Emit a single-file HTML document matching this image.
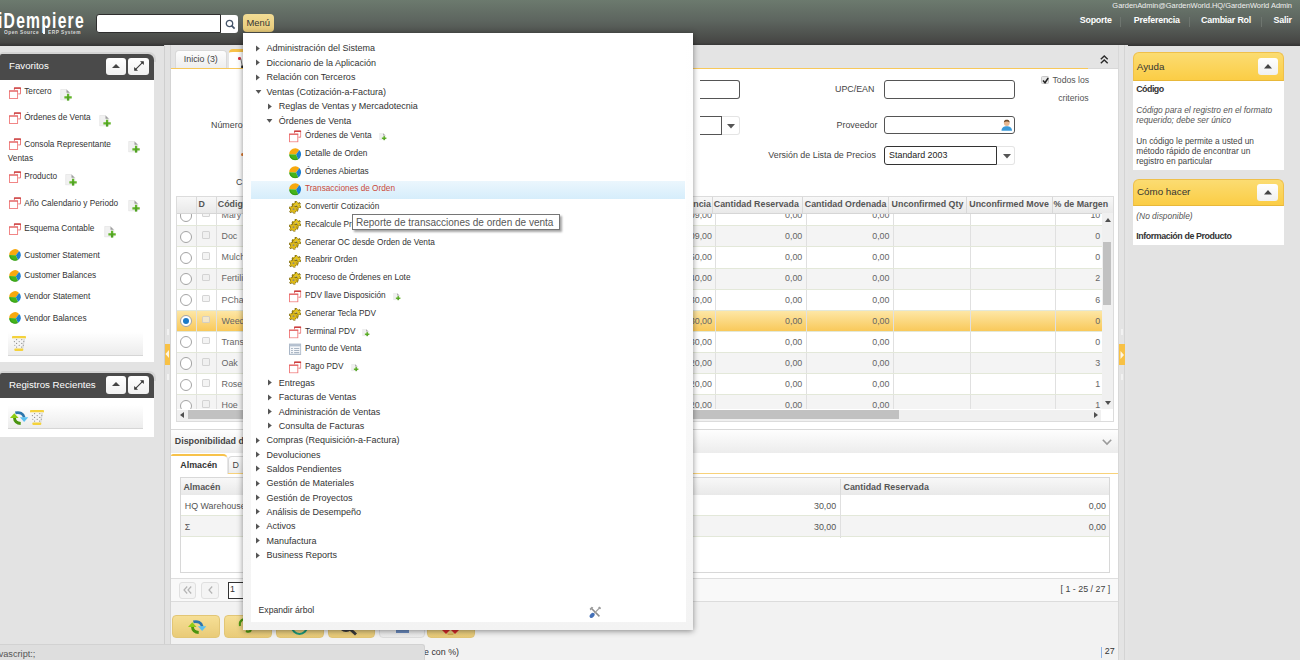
<!DOCTYPE html>
<html><head><meta charset="utf-8">
<style>
*{box-sizing:border-box}
html,body{margin:0;padding:0}
body{width:1300px;height:660px;overflow:hidden;position:relative;background:#e3e3e3;font-family:"Liberation Sans",sans-serif;color:#333;-webkit-font-smoothing:antialiased}
.a{position:absolute}
.t{position:absolute;white-space:nowrap;line-height:1;margin-top:.9px}
svg.i{position:absolute;overflow:visible}
.btn{background:linear-gradient(#fff,#f0f0f0);border-radius:3px}
.up:after{content:"";position:absolute;left:50%;top:50%;margin:-2.3px 0 0 -4px;border:4px solid transparent;border-top:0;border-bottom:4.6px solid #444}
#hdr{left:0;top:0;width:1300px;height:45.5px;background:linear-gradient(#6c7a6e,#5d655f 45%,#464644 92%,#333)}
</style></head><body>
<svg width="0" height="0" style="position:absolute">
<defs>
<symbol id="win" viewBox="0 0 12 12">
 <path d="M5.4 3.2V0.9h6.1v6h-2.3" fill="none" stroke="#e56b6b" stroke-width="0.9"/>
 <rect x="5" y="0.5" width="6.9" height="1.3" fill="#c83a3a"/>
 <rect x="0.5" y="3.9" width="8.1" height="7.6" fill="#fff" stroke="#f07a7a" stroke-width="0.9"/>
 <rect x="0.1" y="3.5" width="8.9" height="1.1" fill="#e06262"/>
</symbol>
<symbol id="newdoc" viewBox="0 0 12 12">
 <path d="M0.5 0.5h6.2l3.3 3.3v7.7h-9.5z" fill="#f1f1f1" stroke="#e2e2e2" stroke-width="0.7"/>
 <path d="M6.5 0.5l3.5 3.5h-3.5z" fill="#9d9d9d"/>
 <path d="M7 5h2.3v2.6h2.7v2.4h-2.7v2.6h-2.3v-2.6h-2.7v-2.4h2.7z" fill="#62b52a"/>
 <path d="M7 7.6h2.3v5h-2.3z" fill="#3f8f1f" opacity="0.5"/>
</symbol>
<symbol id="pie" viewBox="0 0 12 12">
 <path d="M6.9 6.3L0.2 6A5.8 5.8 0 0 1 10.1 1.9z" fill="#f8a90e"/>
 <path d="M6.9 6.3L10.1 1.9A5.8 5.8 0 0 1 8.9 11.02z" fill="#1c7fd2"/>
 <path d="M6.9 6.3L8.9 11.02A5.8 5.8 0 0 1 0.2 6z" fill="#45b41c"/>
 <path d="M0.3 6.6A5.8 5.8 0 0 0 8.9 11.02L8.4 10A4.8 4.8 0 0 1 1.3 6.6z" fill="#2c8e12" opacity="0.55"/>
</symbol>
<symbol id="gear" viewBox="0 0 12 12">
 <g transform="translate(7.2 4.5)">
  <circle r="3.3" fill="#6e5c0c"/><circle r="3.55" fill="none" stroke="#6e5c0c" stroke-width="2.2" stroke-dasharray="1.9 1.82"/>
  <circle r="2.8" fill="#e4c420"/><circle r="3.4" fill="none" stroke="#e4c420" stroke-width="1.4" stroke-dasharray="1.7 2.02"/>
  <circle r="0.9" fill="#b0b0a0"/>
 </g>
 <g transform="translate(4.4 7.9)">
  <circle r="3.3" fill="#6e5c0c"/><circle r="3.55" fill="none" stroke="#6e5c0c" stroke-width="2.2" stroke-dasharray="1.9 1.82"/>
  <circle r="2.8" fill="#dcb81a"/><circle r="3.4" fill="none" stroke="#dcb81a" stroke-width="1.4" stroke-dasharray="1.7 2.02"/>
  <circle r="0.9" fill="#8a8a80"/>
 </g>
</symbol>
<symbol id="info" viewBox="0 0 12 12">
 <rect x="0.5" y="1" width="11" height="10" fill="#f4f6f9" stroke="#a9b6c6" stroke-width="1"/>
 <rect x="0.5" y="1" width="11" height="2.2" fill="#b4c0cf"/>
 <path d="M2 5.3h1.8M5 5.3h5M2 7.3h1.8M5 7.3h5M2 9.3h1.8M5 9.3h5" stroke="#aab6c4" stroke-width="1"/>
</symbol>
<symbol id="trash" viewBox="0 0 14 15">
 <rect x="0" y="0" width="14" height="2.5" rx="0.8" fill="#f4d23c"/>
 <path d="M1 2.5h12l-1.6 10.2h-8.8z" fill="#f4f4f4"/>
 <path d="M13 2.5l-1.6 10.2h-1.4l1.5-10.2z" fill="#dcdcdc"/>
 <g fill="#8c8c8c"><circle cx="4.6" cy="3.6" r="0.6"/><circle cx="9.8" cy="3.6" r="0.6"/><circle cx="2.4" cy="5.6" r="0.6"/><circle cx="7.2" cy="5.6" r="0.6"/><circle cx="11.8" cy="5.6" r="0.5"/><circle cx="4.6" cy="7.4" r="0.6"/><circle cx="9.8" cy="7.4" r="0.6"/><circle cx="2.8" cy="9.3" r="0.55"/><circle cx="7.2" cy="9.3" r="0.6"/><circle cx="11.3" cy="9.3" r="0.5"/><circle cx="4.6" cy="11.1" r="0.6"/><circle cx="9.6" cy="11.1" r="0.6"/></g>
 <rect x="2.3" y="12.6" width="9" height="2.3" rx="0.8" fill="#f4d23c"/>
</symbol>
<symbol id="refresh" viewBox="0 0 19 14">
 <path d="M4.6 6.8C4.6 10.2 7.2 12.4 11 12.6" fill="none" stroke="#4a9410" stroke-width="3"/>
 <path d="M0 7L4.4 2 8.8 7z" fill="#8ccc14"/>
 <path d="M5.5 1.8C9.8 0.6 13.8 2.4 14.6 6.6" fill="none" stroke="#2d76ad" stroke-width="2.8"/>
 <path d="M10.2 6.2h8.6L14.5 11.2z" fill="#5ac0f0"/>
</symbol>
<symbol id="tri" viewBox="0 0 4 7"><path d="M0 0.6l3.8 2.9-3.8 2.9z" fill="#555"/></symbol>
<symbol id="trid" viewBox="0 0 7 4"><path d="M0.6 0h5.8l-2.9 3.8z" fill="#555"/></symbol>
</defs>
</svg>

<!-- HEADER -->
<div id="hdr" class="a"></div>

<!-- header content -->
<div class="t" style="left:-2.5px;top:8.7px;font-size:21.8px;font-weight:bold;color:#fff;transform:scaleX(0.72);transform-origin:0 0;letter-spacing:1.7px">iDempiere</div>
<div class="t" style="left:3.5px;top:28.8px;font-size:5.6px;color:#d8d8d8;letter-spacing:0.55px;font-weight:bold;transform:scaleX(0.86);transform-origin:0 0">Open Source</div>
<div class="a" style="left:42.8px;top:26px;width:2.7px;height:7.8px;background:#fafafa"></div>
<div class="t" style="left:47.7px;top:28.8px;font-size:5.6px;color:#d8d8d8;letter-spacing:0.55px;font-weight:bold;transform:scaleX(0.86);transform-origin:0 0">ERP System</div>
<div class="a" style="left:96px;top:14px;width:125px;height:19px;background:#fff;border:1.5px solid #2e2e2e;border-radius:3px 0 0 3px"></div>
<div class="a" style="left:221px;top:14.5px;width:17px;height:18px;background:#fff;border-radius:0 3px 3px 0"></div>
<svg class="i" style="left:224.5px;top:18.5px" width="11" height="11" viewBox="0 0 11 11"><circle cx="4.5" cy="4.5" r="3.2" fill="none" stroke="#46566a" stroke-width="1.3"/><path d="M6.8 6.8l2.8 2.8" stroke="#46566a" stroke-width="1.7"/></svg>
<div class="a" style="left:243px;top:14px;width:31px;height:18px;background:linear-gradient(#f2dc95,#e6c978);border-radius:4px"></div>
<div class="t" style="left:246.5px;top:17.5px;font-size:9.4px;color:#333">Menú</div>
<div class="t" style="right:8px;top:1.5px;font-size:7.45px;color:#f0f0f0">GardenAdmin@GardenWorld.HQ/GardenWorld Admin</div>
<div class="t" style="left:1079.7px;top:15.6px;font-size:8.9px;font-weight:bold;color:#fff;letter-spacing:-0.2px">Soporte</div>
<div class="a" style="left:1120px;top:17px;width:1px;height:10px;background:#6e756f"></div>
<div class="t" style="left:1133.7px;top:15.6px;font-size:8.9px;font-weight:bold;color:#fff;letter-spacing:-0.2px">Preferencia</div>
<div class="a" style="left:1188.7px;top:17px;width:1px;height:10px;background:#6e756f"></div>
<div class="t" style="left:1201px;top:15.6px;font-size:8.9px;font-weight:bold;color:#fff;letter-spacing:-0.2px">Cambiar Rol</div>
<div class="a" style="left:1261.3px;top:17px;width:1px;height:10px;background:#6e756f"></div>
<div class="t" style="left:1273.5px;top:15.6px;font-size:8.9px;font-weight:bold;color:#fff;letter-spacing:-0.2px">Salir</div>

<!-- LEFT PANEL -->
<div class="a" style="left:0;top:52px;width:156px;height:10px;background:#d4d4d4;border-radius:3px 7px 0 0"></div>
<div class="a" style="left:0;top:54px;width:154px;height:26px;background:#4a4a4a;border-radius:2px 6px 0 0"></div>
<div class="t" style="left:9px;top:60.3px;font-size:9.7px;color:#fff">Favoritos</div>
<div class="a btn up" style="left:105.8px;top:57.5px;width:20px;height:17.5px"></div>
<div class="a btn" style="left:128.2px;top:57.5px;width:20.5px;height:17.5px"></div><svg class="i" style="left:132.5px;top:60.2px" width="12" height="12" viewBox="0 0 12 12"><path d="M2.6 9.4L9.4 2.6" stroke="#3a3a3a" stroke-width="1.1"/><path d="M7 1.2h3.8v3.8z" fill="#333"/><path d="M1.2 7v3.8h3.8z" fill="#333"/></svg>
<div class="a" style="left:0;top:80px;width:154px;height:282px;background:#fff"></div>

<svg class="i" style="left:9.0px;top:86.6px" width="12" height="12"><use href="#win"/></svg>
<div class="t" style="left:24.2px;top:87.6px;font-size:8.25px;color:#333;">Tercero</div>
<svg class="i" style="left:60.0px;top:89.2px" width="12" height="11.5"><use href="#newdoc"/></svg>
<svg class="i" style="left:9.0px;top:111.6px" width="12" height="12"><use href="#win"/></svg>
<div class="t" style="left:24.2px;top:112.7px;font-size:8.25px;color:#333;">Órdenes de Venta</div>
<svg class="i" style="left:99.4px;top:115.0px" width="12" height="11.5"><use href="#newdoc"/></svg>
<svg class="i" style="left:9.0px;top:138.0px" width="12" height="12"><use href="#win"/></svg>
<div class="t" style="left:24.2px;top:140.0px;font-size:8.25px;color:#333;">Consola Representante</div>
<svg class="i" style="left:128.0px;top:141.0px" width="12" height="11.5"><use href="#newdoc"/></svg>
<svg class="i" style="left:9.0px;top:170.6px" width="12" height="12"><use href="#win"/></svg>
<div class="t" style="left:24.2px;top:172.6px;font-size:8.25px;color:#333;">Producto</div>
<svg class="i" style="left:65.3px;top:173.8px" width="12" height="11.5"><use href="#newdoc"/></svg>
<svg class="i" style="left:9.0px;top:196.8px" width="12" height="12"><use href="#win"/></svg>
<div class="t" style="left:24.2px;top:198.7px;font-size:8.25px;color:#333;">Año Calendario y Periodo</div>
<svg class="i" style="left:128.0px;top:200.0px" width="12" height="11.5"><use href="#newdoc"/></svg>
<svg class="i" style="left:9.0px;top:222.9px" width="12" height="12"><use href="#win"/></svg>
<div class="t" style="left:24.2px;top:224.3px;font-size:8.25px;color:#333;">Esquema Contable</div>
<svg class="i" style="left:104.0px;top:225.7px" width="12" height="11.5"><use href="#newdoc"/></svg>
<div class="t" style="left:7.8px;top:154.3px;font-size:8.25px;color:#333;">Ventas</div>
<svg class="i" style="left:9.0px;top:249.2px" width="12" height="12"><use href="#pie"/></svg>
<div class="t" style="left:24.2px;top:250.7px;font-size:8.25px;color:#333;">Customer Statement</div>
<svg class="i" style="left:9.0px;top:270.0px" width="12" height="12"><use href="#pie"/></svg>
<div class="t" style="left:24.2px;top:271.5px;font-size:8.25px;color:#333;">Customer Balances</div>
<svg class="i" style="left:9.0px;top:290.9px" width="12" height="12"><use href="#pie"/></svg>
<div class="t" style="left:24.2px;top:292.4px;font-size:8.25px;color:#333;">Vendor Statement</div>
<svg class="i" style="left:9.0px;top:312.4px" width="12" height="12"><use href="#pie"/></svg>
<div class="t" style="left:24.2px;top:313.9px;font-size:8.25px;color:#333;">Vendor Balances</div>
<div class="a" style="left:7.6px;top:332px;width:135px;height:24px;background:linear-gradient(#fff,#ececec);border-bottom:1px solid #d6d6d6"></div>
<svg class="i" style="left:11.8px;top:335.5px" width="14" height="15"><use href="#trash"/></svg>
<div class="a" style="left:0;top:371px;width:156px;height:10px;background:#d4d4d4;border-radius:3px 7px 0 0"></div>
<div class="a" style="left:0;top:373px;width:154px;height:25px;background:#4a4a4a;border-radius:2px 6px 0 0"></div>
<div class="t" style="left:9.0px;top:378.8px;font-size:9.7px;color:#fff;">Registros Recientes</div>
<div class="a btn up" style="left:106px;top:376px;width:20px;height:17.5px"></div>
<div class="a btn" style="left:128px;top:376px;width:20.5px;height:17.5px"></div><svg class="i" style="left:132.5px;top:378.8px" width="12" height="12" viewBox="0 0 12 12"><path d="M2.6 9.4L9.4 2.6" stroke="#3a3a3a" stroke-width="1.1"/><path d="M7 1.2h3.8v3.8z" fill="#333"/><path d="M1.2 7v3.8h3.8z" fill="#333"/></svg>
<div class="a" style="left:0;top:398px;width:154px;height:39px;background:#fff"></div>
<div class="a" style="left:7.6px;top:405.3px;width:135.4px;height:24.2px;background:linear-gradient(#fff,#ececec);border-bottom:1px solid #d6d6d6"></div>
<svg class="i" style="left:10.3px;top:410.6px" width="18.5" height="14"><use href="#refresh"/></svg>
<svg class="i" style="left:30.3px;top:409.8px" width="14" height="15"><use href="#trash"/></svg>
<div class="a" style="left:164.0px;top:45.0px;width:7.0px;height:615.0px;background:#e2e2e2;border-left:1px solid #cfcfcf;border-right:1px solid #d4d4d4"></div>
<div class="a" style="left:164.5px;top:343.5px;width:5.5px;height:21.5px;background:#f8c145"></div>
<svg class="i" style="left:165px;top:350px" width="5" height="8"><path d="M4 0v8L0.5 4z" fill="#fff" opacity="0.85"/></svg>
<div class="a" style="left:1118.0px;top:45.0px;width:10.0px;height:615.0px;background:#e4e4e4;border-left:1px solid #d8d8d8"></div>
<div class="a" style="left:1124.3px;top:45.0px;width:1.0px;height:615.0px;background:#d4d4d4"></div>
<div class="a" style="left:1119.0px;top:343.5px;width:5.6px;height:21.3px;background:#f8c145"></div>
<svg class="i" style="left:1120px;top:350.5px" width="5" height="8"><path d="M0.5 0v8L4 4z" fill="#fff" opacity="0.85"/></svg>
<div class="a" style="left:1121.0px;top:329.0px;width:2.0px;height:6.0px;background:#f2f2f2"></div>
<div class="a" style="left:166.5px;top:329.0px;width:2.0px;height:6.0px;background:#f2f2f2"></div>
<div class="a" style="left:1121.0px;top:374.0px;width:2.0px;height:6.0px;background:#f2f2f2"></div>
<div class="a" style="left:166.5px;top:374.0px;width:2.0px;height:6.0px;background:#f2f2f2"></div>
<div class="a" style="left:171.0px;top:45.0px;width:947.0px;height:615.0px;background:#fff"></div>
<div class="a" style="left:171.0px;top:45.0px;width:947.0px;height:23.5px;background:#e4e4e4"></div>
<div class="a" style="left:175.0px;top:50.0px;width:51.5px;height:18.5px;background:linear-gradient(#fdfdfd,#ededed);border:1px solid #d9d9d9;border-bottom:0;border-radius:4px 4px 0 0"></div>
<div class="t" style="left:183.8px;top:54.4px;font-size:8.9px;color:#444;">Inicio (3)</div>
<div class="a" style="left:229.0px;top:49.1px;width:71.0px;height:19.9px;background:#fff;border-top:3px solid #f7c24a;border-radius:4px 4px 0 0"></div>
<div class="a" style="left:238.2px;top:57.2px;width:2.6px;height:2.6px;border-radius:50%;background:#d83040"></div>
<svg class="i" style="left:240px;top:58px" width="4" height="11"><path d="M0.8 0.5L2.3 8.5" stroke="#666" stroke-width="0.9"/><rect x="1.2" y="7.6" width="2.6" height="2.4" fill="#222"/></svg>
<div class="a" style="left:171.0px;top:68.0px;width:917.0px;height:1.2px;background:#f7c85a"></div>
<div class="a" style="left:1088.0px;top:68.0px;width:30.0px;height:1.2px;background:#d8d8d8"></div>
<svg class="i" style="left:1099.5px;top:55px" width="8.5" height="9" viewBox="0 0 8.5 9"><path d="M0.8 4.3L4.25 1 7.7 4.3M0.8 8.2L4.25 4.9 7.7 8.2" fill="none" stroke="#2a2a2a" stroke-width="1.4"/></svg>
<div class="t" style="left:211.0px;top:119.9px;font-size:8.9px;color:#444;">Número</div>
<div class="a" style="left:700.0px;top:80.4px;width:39.6px;height:18.4px;background:#fff;border:1.3px solid #555;border-left:0;border-radius:0 3px 3px 0"></div>
<div class="a" style="left:700.0px;top:116.0px;width:21.6px;height:18.5px;background:#fff;border:1.3px solid #555;border-left:0"></div>
<div class="a" style="left:721.6px;top:116.0px;width:18.0px;height:18.5px;background:#fff;border:1px solid #e4e4e4;border-left:0;border-radius:0 3px 3px 0"></div>
<svg class="i" style="left:727px;top:123.5px" width="8" height="4.5"><path d="M0 0h8L4 4.5z" fill="#555"/></svg>
<div class="t" style="left:835.0px;top:84.5px;font-size:8.9px;color:#444;">UPC/EAN</div>
<div class="a" style="left:884.4px;top:80.4px;width:131.0px;height:18.6px;background:#fff;border:1.3px solid #555;border-radius:3px"></div>
<div class="t" style="left:836.5px;top:120.4px;font-size:8.9px;color:#444;">Proveedor</div>
<div class="a" style="left:884.4px;top:116.2px;width:131.0px;height:18.2px;background:#fff;border:1.3px solid #555;border-radius:3px"></div>
<svg class="i" style="left:1001px;top:119.4px" width="11.5" height="12" viewBox="0 0 12 12"><path d="M0.5 12C0.5 8.5 3 7.2 6 7.2S11.5 8.5 11.5 12z" fill="#3b9ad8"/><circle cx="6" cy="4" r="3" fill="#e8b890"/><path d="M3 3.5C3 1 4.5 0.5 6 0.5S9 1 9 3.5C8 2.5 7 2.3 6 2.3S4 2.5 3 3.5z" fill="#6b4a2a"/></svg>
<div class="t" style="left:768.3px;top:150.0px;font-size:8.9px;color:#444;">Versión de Lista de Precios</div>
<div class="a" style="left:884.4px;top:146.3px;width:112.7px;height:18.3px;background:#fff;border:1.3px solid #333;border-right-width:1.3px;border-radius:3px 0 0 3px"></div>
<div class="a" style="left:997.1px;top:146.3px;width:18.3px;height:18.3px;background:#fff;border:1px solid #e4e4e4;border-left:0;border-radius:0 3px 3px 0"></div>
<svg class="i" style="left:1002.5px;top:154px" width="8" height="4.5"><path d="M0 0h8L4 4.5z" fill="#555"/></svg>
<div class="t" style="left:889.1px;top:150.0px;font-size:8.9px;color:#222;">Standard 2003</div>
<div class="a" style="left:1041.2px;top:76.0px;width:8.1px;height:8.0px;background:#e8e8e8;border:1px solid #c8c8c8;border-radius:1.5px"></div>
<svg class="i" style="left:1042px;top:76.5px" width="7" height="7"><path d="M1 3.5L3 5.7 6.2 1" fill="none" stroke="#222" stroke-width="1.5"/></svg>
<div class="t" style="left:1052.5px;top:75.2px;font-size:8.7px;color:#555;">Todos los</div>
<div class="t" style="left:1058.2px;top:93.1px;font-size:8.7px;color:#555;">criterios</div>
<div class="t" style="left:236.0px;top:176.9px;font-size:8.9px;color:#444;">C</div>
<div class="a" style="left:241px;top:152.5px;width:3px;height:3px;border-radius:50%;background:#e07a30"></div>
<div class="a" style="left:175.5px;top:195.5px;width:938.2px;height:226.0px;background:#fff;border:1px solid #dcdcdc"></div>
<div class="a" style="left:176.5px;top:196.5px;width:936.2px;height:17.7px;background:linear-gradient(#f8f8f8,#e9e9e9);border-bottom:1px solid #d6d6d6"></div>
<div class="a" style="left:195.5px;top:196.5px;width:1.0px;height:16.8px;background:#d8d8d8"></div>
<div class="a" style="left:215.5px;top:196.5px;width:1.0px;height:16.8px;background:#d8d8d8"></div>
<div class="a" style="left:711.5px;top:196.5px;width:1.0px;height:16.8px;background:#d8d8d8"></div>
<div class="a" style="left:801.5px;top:196.5px;width:1.0px;height:16.8px;background:#d8d8d8"></div>
<div class="a" style="left:888.4px;top:196.5px;width:1.0px;height:16.8px;background:#d8d8d8"></div>
<div class="a" style="left:965.5px;top:196.5px;width:1.0px;height:16.8px;background:#d8d8d8"></div>
<div class="a" style="left:1051.6px;top:196.5px;width:1.0px;height:16.8px;background:#d8d8d8"></div>
<div class="t" style="left:198.5px;top:199.1px;font-size:8.85px;color:#555;font-weight:bold">D</div>
<div class="t" style="left:217.8px;top:199.1px;font-size:8.85px;color:#555;font-weight:bold">Código</div>
<div class="t" style="left:713.8px;top:199.1px;font-size:8.85px;color:#555;font-weight:bold">Cantidad Reservada</div>
<div class="t" style="left:804.8px;top:199.1px;font-size:8.85px;color:#555;font-weight:bold">Cantidad Ordenada</div>
<div class="t" style="left:891.6px;top:199.1px;font-size:8.85px;color:#555;font-weight:bold">Unconfirmed Qty</div>
<div class="t" style="left:969.3px;top:199.1px;font-size:8.85px;color:#555;font-weight:bold">Unconfirmed Move</div>
<div class="t" style="left:1053.6px;top:199.1px;font-size:8.85px;color:#555;font-weight:bold">% de Margen</div>
<div class="t" style="right:589.0px;top:199.1px;font-size:8.85px;color:#555;font-weight:bold">ncia</div>
<div class="a" style="left:176.5px;top:214.2px;width:925.5px;height:195.3px;overflow:hidden">
<div class="a" style="left:0.0px;top:-9.2px;width:925.5px;height:21.0px;background:#fff;border-bottom:1px solid #e3e8d9"></div>
<div class="a" style="left:19.5px;top:-9.2px;width:1.0px;height:20.0px;background:#e0e0e0"></div>
<div class="a" style="left:39.5px;top:-9.2px;width:1.0px;height:20.0px;background:#e0e0e0"></div>
<div class="a" style="left:538.5px;top:-9.2px;width:1.0px;height:20.0px;background:#e0e0e0"></div>
<div class="a" style="left:629.5px;top:-9.2px;width:1.0px;height:20.0px;background:#e0e0e0"></div>
<div class="a" style="left:716.5px;top:-9.2px;width:1.0px;height:20.0px;background:#e0e0e0"></div>
<div class="a" style="left:793.5px;top:-9.2px;width:1.0px;height:20.0px;background:#e0e0e0"></div>
<div class="a" style="left:878.5px;top:-9.2px;width:1.0px;height:20.0px;background:#e0e0e0"></div>
<div class="a" style="left:3.7px;top:-4.8px;width:12.2px;height:12.2px;border-radius:50%;border:1.2px solid #a4a4a4;background:#fff"></div>
<div class="a" style="left:25.7px;top:-4.1px;width:7.7px;height:7.4px;background:rgba(238,238,238,0.65);border:1px solid rgba(190,190,190,0.6);border-radius:1.5px"></div>
<div class="t" style="left:45.0px;top:-4.1px;font-size:8.9px;color:#666;">Mary</div>
<div class="t" style="left:535.5px;top:-4.1px;font-size:8.9px;color:#666;;transform:translateX(-100%)">09,00</div>
<div class="t" style="left:625.8px;top:-4.1px;font-size:8.9px;color:#666;;transform:translateX(-100%)">0,00</div>
<div class="t" style="left:713.0px;top:-4.1px;font-size:8.9px;color:#666;;transform:translateX(-100%)">0,00</div>
<div class="t" style="left:923.8px;top:-4.1px;font-size:8.9px;color:#666;;transform:translateX(-100%)">10</div>
<div class="a" style="left:0.0px;top:11.8px;width:925.5px;height:21.0px;background:#f4f4f4;border-bottom:1px solid #e3e8d9"></div>
<div class="a" style="left:19.5px;top:11.8px;width:1.0px;height:20.0px;background:#e0e0e0"></div>
<div class="a" style="left:39.5px;top:11.8px;width:1.0px;height:20.0px;background:#e0e0e0"></div>
<div class="a" style="left:538.5px;top:11.8px;width:1.0px;height:20.0px;background:#e0e0e0"></div>
<div class="a" style="left:629.5px;top:11.8px;width:1.0px;height:20.0px;background:#e0e0e0"></div>
<div class="a" style="left:716.5px;top:11.8px;width:1.0px;height:20.0px;background:#e0e0e0"></div>
<div class="a" style="left:793.5px;top:11.8px;width:1.0px;height:20.0px;background:#e0e0e0"></div>
<div class="a" style="left:878.5px;top:11.8px;width:1.0px;height:20.0px;background:#e0e0e0"></div>
<div class="a" style="left:3.7px;top:16.4px;width:12.2px;height:12.2px;border-radius:50%;border:1.2px solid #a4a4a4;background:#fff"></div>
<div class="a" style="left:25.7px;top:17.1px;width:7.7px;height:7.4px;background:rgba(238,238,238,0.65);border:1px solid rgba(190,190,190,0.6);border-radius:1.5px"></div>
<div class="t" style="left:45.0px;top:17.1px;font-size:8.9px;color:#666;">Doc</div>
<div class="t" style="left:535.5px;top:17.1px;font-size:8.9px;color:#666;;transform:translateX(-100%)">09,00</div>
<div class="t" style="left:625.8px;top:17.1px;font-size:8.9px;color:#666;;transform:translateX(-100%)">0,00</div>
<div class="t" style="left:713.0px;top:17.1px;font-size:8.9px;color:#666;;transform:translateX(-100%)">0,00</div>
<div class="t" style="left:923.8px;top:17.1px;font-size:8.9px;color:#666;;transform:translateX(-100%)">0</div>
<div class="a" style="left:0.0px;top:32.8px;width:925.5px;height:22.0px;background:#fff;border-bottom:1px solid #e3e8d9"></div>
<div class="a" style="left:19.5px;top:32.8px;width:1.0px;height:21.0px;background:#e0e0e0"></div>
<div class="a" style="left:39.5px;top:32.8px;width:1.0px;height:21.0px;background:#e0e0e0"></div>
<div class="a" style="left:538.5px;top:32.8px;width:1.0px;height:21.0px;background:#e0e0e0"></div>
<div class="a" style="left:629.5px;top:32.8px;width:1.0px;height:21.0px;background:#e0e0e0"></div>
<div class="a" style="left:716.5px;top:32.8px;width:1.0px;height:21.0px;background:#e0e0e0"></div>
<div class="a" style="left:793.5px;top:32.8px;width:1.0px;height:21.0px;background:#e0e0e0"></div>
<div class="a" style="left:878.5px;top:32.8px;width:1.0px;height:21.0px;background:#e0e0e0"></div>
<div class="a" style="left:3.7px;top:37.5px;width:12.2px;height:12.2px;border-radius:50%;border:1.2px solid #a4a4a4;background:#fff"></div>
<div class="a" style="left:25.7px;top:38.2px;width:7.7px;height:7.4px;background:rgba(238,238,238,0.65);border:1px solid rgba(190,190,190,0.6);border-radius:1.5px"></div>
<div class="t" style="left:45.0px;top:38.2px;font-size:8.9px;color:#666;">Mulch</div>
<div class="t" style="left:535.5px;top:38.2px;font-size:8.9px;color:#666;;transform:translateX(-100%)">50,00</div>
<div class="t" style="left:625.8px;top:38.2px;font-size:8.9px;color:#666;;transform:translateX(-100%)">0,00</div>
<div class="t" style="left:713.0px;top:38.2px;font-size:8.9px;color:#666;;transform:translateX(-100%)">0,00</div>
<div class="t" style="left:923.8px;top:38.2px;font-size:8.9px;color:#666;;transform:translateX(-100%)">0</div>
<div class="a" style="left:0.0px;top:54.8px;width:925.5px;height:21.0px;background:#f4f4f4;border-bottom:1px solid #e3e8d9"></div>
<div class="a" style="left:19.5px;top:54.8px;width:1.0px;height:20.0px;background:#e0e0e0"></div>
<div class="a" style="left:39.5px;top:54.8px;width:1.0px;height:20.0px;background:#e0e0e0"></div>
<div class="a" style="left:538.5px;top:54.8px;width:1.0px;height:20.0px;background:#e0e0e0"></div>
<div class="a" style="left:629.5px;top:54.8px;width:1.0px;height:20.0px;background:#e0e0e0"></div>
<div class="a" style="left:716.5px;top:54.8px;width:1.0px;height:20.0px;background:#e0e0e0"></div>
<div class="a" style="left:793.5px;top:54.8px;width:1.0px;height:20.0px;background:#e0e0e0"></div>
<div class="a" style="left:878.5px;top:54.8px;width:1.0px;height:20.0px;background:#e0e0e0"></div>
<div class="a" style="left:3.7px;top:58.7px;width:12.2px;height:12.2px;border-radius:50%;border:1.2px solid #a4a4a4;background:#fff"></div>
<div class="a" style="left:25.7px;top:59.4px;width:7.7px;height:7.4px;background:rgba(238,238,238,0.65);border:1px solid rgba(190,190,190,0.6);border-radius:1.5px"></div>
<div class="t" style="left:45.0px;top:59.4px;font-size:8.9px;color:#666;">Fertili</div>
<div class="t" style="left:535.5px;top:59.4px;font-size:8.9px;color:#666;;transform:translateX(-100%)">40,00</div>
<div class="t" style="left:625.8px;top:59.4px;font-size:8.9px;color:#666;;transform:translateX(-100%)">0,00</div>
<div class="t" style="left:713.0px;top:59.4px;font-size:8.9px;color:#666;;transform:translateX(-100%)">0,00</div>
<div class="t" style="left:923.8px;top:59.4px;font-size:8.9px;color:#666;;transform:translateX(-100%)">2</div>
<div class="a" style="left:0.0px;top:75.8px;width:925.5px;height:21.0px;background:#fff;border-bottom:1px solid #e3e8d9"></div>
<div class="a" style="left:19.5px;top:75.8px;width:1.0px;height:20.0px;background:#e0e0e0"></div>
<div class="a" style="left:39.5px;top:75.8px;width:1.0px;height:20.0px;background:#e0e0e0"></div>
<div class="a" style="left:538.5px;top:75.8px;width:1.0px;height:20.0px;background:#e0e0e0"></div>
<div class="a" style="left:629.5px;top:75.8px;width:1.0px;height:20.0px;background:#e0e0e0"></div>
<div class="a" style="left:716.5px;top:75.8px;width:1.0px;height:20.0px;background:#e0e0e0"></div>
<div class="a" style="left:793.5px;top:75.8px;width:1.0px;height:20.0px;background:#e0e0e0"></div>
<div class="a" style="left:878.5px;top:75.8px;width:1.0px;height:20.0px;background:#e0e0e0"></div>
<div class="a" style="left:3.7px;top:79.8px;width:12.2px;height:12.2px;border-radius:50%;border:1.2px solid #a4a4a4;background:#fff"></div>
<div class="a" style="left:25.7px;top:80.5px;width:7.7px;height:7.4px;background:rgba(238,238,238,0.65);border:1px solid rgba(190,190,190,0.6);border-radius:1.5px"></div>
<div class="t" style="left:45.0px;top:80.5px;font-size:8.9px;color:#666;">PCha</div>
<div class="t" style="left:535.5px;top:80.5px;font-size:8.9px;color:#666;;transform:translateX(-100%)">30,00</div>
<div class="t" style="left:625.8px;top:80.5px;font-size:8.9px;color:#666;;transform:translateX(-100%)">0,00</div>
<div class="t" style="left:713.0px;top:80.5px;font-size:8.9px;color:#666;;transform:translateX(-100%)">0,00</div>
<div class="t" style="left:923.8px;top:80.5px;font-size:8.9px;color:#666;;transform:translateX(-100%)">6</div>
<div class="a" style="left:0.0px;top:96.8px;width:925.5px;height:21.0px;background:linear-gradient(#fde7a6,#f9c95a);border-bottom:1px solid #e3e8d9"></div>
<div class="a" style="left:19.5px;top:96.8px;width:1.0px;height:20.0px;background:#e0e0e0"></div>
<div class="a" style="left:39.5px;top:96.8px;width:1.0px;height:20.0px;background:#e0e0e0"></div>
<div class="a" style="left:538.5px;top:96.8px;width:1.0px;height:20.0px;background:#e0e0e0"></div>
<div class="a" style="left:629.5px;top:96.8px;width:1.0px;height:20.0px;background:#e0e0e0"></div>
<div class="a" style="left:716.5px;top:96.8px;width:1.0px;height:20.0px;background:#e0e0e0"></div>
<div class="a" style="left:793.5px;top:96.8px;width:1.0px;height:20.0px;background:#e0e0e0"></div>
<div class="a" style="left:878.5px;top:96.8px;width:1.0px;height:20.0px;background:#e0e0e0"></div>
<div class="a" style="left:3.7px;top:101.0px;width:12.2px;height:12.2px;border-radius:50%;border:1.2px solid #a4a4a4;background:#fff"></div>
<div class="a" style="left:6.6px;top:103.9px;width:6.4px;height:6.4px;border-radius:50%;background:#1c7ac6"></div>
<div class="a" style="left:25.7px;top:101.7px;width:7.7px;height:7.4px;background:rgba(238,238,238,0.65);border:1px solid rgba(190,190,190,0.6);border-radius:1.5px"></div>
<div class="t" style="left:45.0px;top:101.7px;font-size:8.9px;color:#666;">Weed</div>
<div class="t" style="left:535.5px;top:101.7px;font-size:8.9px;color:#666;;transform:translateX(-100%)">30,00</div>
<div class="t" style="left:625.8px;top:101.7px;font-size:8.9px;color:#666;;transform:translateX(-100%)">0,00</div>
<div class="t" style="left:713.0px;top:101.7px;font-size:8.9px;color:#666;;transform:translateX(-100%)">0,00</div>
<div class="t" style="left:923.8px;top:101.7px;font-size:8.9px;color:#666;;transform:translateX(-100%)">0</div>
<div class="a" style="left:0.0px;top:117.8px;width:925.5px;height:21.0px;background:#fff;border-bottom:1px solid #e3e8d9"></div>
<div class="a" style="left:19.5px;top:117.8px;width:1.0px;height:20.0px;background:#e0e0e0"></div>
<div class="a" style="left:39.5px;top:117.8px;width:1.0px;height:20.0px;background:#e0e0e0"></div>
<div class="a" style="left:538.5px;top:117.8px;width:1.0px;height:20.0px;background:#e0e0e0"></div>
<div class="a" style="left:629.5px;top:117.8px;width:1.0px;height:20.0px;background:#e0e0e0"></div>
<div class="a" style="left:716.5px;top:117.8px;width:1.0px;height:20.0px;background:#e0e0e0"></div>
<div class="a" style="left:793.5px;top:117.8px;width:1.0px;height:20.0px;background:#e0e0e0"></div>
<div class="a" style="left:878.5px;top:117.8px;width:1.0px;height:20.0px;background:#e0e0e0"></div>
<div class="a" style="left:3.7px;top:122.1px;width:12.2px;height:12.2px;border-radius:50%;border:1.2px solid #a4a4a4;background:#fff"></div>
<div class="a" style="left:25.7px;top:122.8px;width:7.7px;height:7.4px;background:rgba(238,238,238,0.65);border:1px solid rgba(190,190,190,0.6);border-radius:1.5px"></div>
<div class="t" style="left:45.0px;top:122.8px;font-size:8.9px;color:#666;">Trans</div>
<div class="t" style="left:535.5px;top:122.8px;font-size:8.9px;color:#666;;transform:translateX(-100%)">30,00</div>
<div class="t" style="left:625.8px;top:122.8px;font-size:8.9px;color:#666;;transform:translateX(-100%)">0,00</div>
<div class="t" style="left:713.0px;top:122.8px;font-size:8.9px;color:#666;;transform:translateX(-100%)">0,00</div>
<div class="t" style="left:923.8px;top:122.8px;font-size:8.9px;color:#666;;transform:translateX(-100%)">0</div>
<div class="a" style="left:0.0px;top:138.8px;width:925.5px;height:21.0px;background:#f4f4f4;border-bottom:1px solid #e3e8d9"></div>
<div class="a" style="left:19.5px;top:138.8px;width:1.0px;height:20.0px;background:#e0e0e0"></div>
<div class="a" style="left:39.5px;top:138.8px;width:1.0px;height:20.0px;background:#e0e0e0"></div>
<div class="a" style="left:538.5px;top:138.8px;width:1.0px;height:20.0px;background:#e0e0e0"></div>
<div class="a" style="left:629.5px;top:138.8px;width:1.0px;height:20.0px;background:#e0e0e0"></div>
<div class="a" style="left:716.5px;top:138.8px;width:1.0px;height:20.0px;background:#e0e0e0"></div>
<div class="a" style="left:793.5px;top:138.8px;width:1.0px;height:20.0px;background:#e0e0e0"></div>
<div class="a" style="left:878.5px;top:138.8px;width:1.0px;height:20.0px;background:#e0e0e0"></div>
<div class="a" style="left:3.7px;top:143.3px;width:12.2px;height:12.2px;border-radius:50%;border:1.2px solid #a4a4a4;background:#fff"></div>
<div class="a" style="left:25.7px;top:144.0px;width:7.7px;height:7.4px;background:rgba(238,238,238,0.65);border:1px solid rgba(190,190,190,0.6);border-radius:1.5px"></div>
<div class="t" style="left:45.0px;top:144.0px;font-size:8.9px;color:#666;">Oak</div>
<div class="t" style="left:535.5px;top:144.0px;font-size:8.9px;color:#666;;transform:translateX(-100%)">20,00</div>
<div class="t" style="left:625.8px;top:144.0px;font-size:8.9px;color:#666;;transform:translateX(-100%)">0,00</div>
<div class="t" style="left:713.0px;top:144.0px;font-size:8.9px;color:#666;;transform:translateX(-100%)">0,00</div>
<div class="t" style="left:923.8px;top:144.0px;font-size:8.9px;color:#666;;transform:translateX(-100%)">3</div>
<div class="a" style="left:0.0px;top:159.8px;width:925.5px;height:21.0px;background:#fff;border-bottom:1px solid #e3e8d9"></div>
<div class="a" style="left:19.5px;top:159.8px;width:1.0px;height:20.0px;background:#e0e0e0"></div>
<div class="a" style="left:39.5px;top:159.8px;width:1.0px;height:20.0px;background:#e0e0e0"></div>
<div class="a" style="left:538.5px;top:159.8px;width:1.0px;height:20.0px;background:#e0e0e0"></div>
<div class="a" style="left:629.5px;top:159.8px;width:1.0px;height:20.0px;background:#e0e0e0"></div>
<div class="a" style="left:716.5px;top:159.8px;width:1.0px;height:20.0px;background:#e0e0e0"></div>
<div class="a" style="left:793.5px;top:159.8px;width:1.0px;height:20.0px;background:#e0e0e0"></div>
<div class="a" style="left:878.5px;top:159.8px;width:1.0px;height:20.0px;background:#e0e0e0"></div>
<div class="a" style="left:3.7px;top:164.4px;width:12.2px;height:12.2px;border-radius:50%;border:1.2px solid #a4a4a4;background:#fff"></div>
<div class="a" style="left:25.7px;top:165.1px;width:7.7px;height:7.4px;background:rgba(238,238,238,0.65);border:1px solid rgba(190,190,190,0.6);border-radius:1.5px"></div>
<div class="t" style="left:45.0px;top:165.1px;font-size:8.9px;color:#666;">Rose</div>
<div class="t" style="left:535.5px;top:165.1px;font-size:8.9px;color:#666;;transform:translateX(-100%)">20,00</div>
<div class="t" style="left:625.8px;top:165.1px;font-size:8.9px;color:#666;;transform:translateX(-100%)">0,00</div>
<div class="t" style="left:713.0px;top:165.1px;font-size:8.9px;color:#666;;transform:translateX(-100%)">0,00</div>
<div class="t" style="left:923.8px;top:165.1px;font-size:8.9px;color:#666;;transform:translateX(-100%)">1</div>
<div class="a" style="left:0.0px;top:180.8px;width:925.5px;height:22.0px;background:#f4f4f4;border-bottom:1px solid #e3e8d9"></div>
<div class="a" style="left:19.5px;top:180.8px;width:1.0px;height:21.0px;background:#e0e0e0"></div>
<div class="a" style="left:39.5px;top:180.8px;width:1.0px;height:21.0px;background:#e0e0e0"></div>
<div class="a" style="left:538.5px;top:180.8px;width:1.0px;height:21.0px;background:#e0e0e0"></div>
<div class="a" style="left:629.5px;top:180.8px;width:1.0px;height:21.0px;background:#e0e0e0"></div>
<div class="a" style="left:716.5px;top:180.8px;width:1.0px;height:21.0px;background:#e0e0e0"></div>
<div class="a" style="left:793.5px;top:180.8px;width:1.0px;height:21.0px;background:#e0e0e0"></div>
<div class="a" style="left:878.5px;top:180.8px;width:1.0px;height:21.0px;background:#e0e0e0"></div>
<div class="a" style="left:3.7px;top:185.6px;width:12.2px;height:12.2px;border-radius:50%;border:1.2px solid #a4a4a4;background:#fff"></div>
<div class="a" style="left:25.7px;top:186.3px;width:7.7px;height:7.4px;background:rgba(238,238,238,0.65);border:1px solid rgba(190,190,190,0.6);border-radius:1.5px"></div>
<div class="t" style="left:45.0px;top:186.3px;font-size:8.9px;color:#666;">Hoe</div>
<div class="t" style="left:535.5px;top:186.3px;font-size:8.9px;color:#666;;transform:translateX(-100%)">20,00</div>
<div class="t" style="left:625.8px;top:186.3px;font-size:8.9px;color:#666;;transform:translateX(-100%)">0,00</div>
<div class="t" style="left:713.0px;top:186.3px;font-size:8.9px;color:#666;;transform:translateX(-100%)">0,00</div>
<div class="t" style="left:923.8px;top:186.3px;font-size:8.9px;color:#666;;transform:translateX(-100%)">1</div>
</div>
<div class="a" style="left:1102.0px;top:213.3px;width:11.0px;height:196.2px;background:#f0f0f0"></div>
<div class="a" style="left:1103.0px;top:241.8px;width:8.2px;height:62.8px;background:#c1c1c1"></div>
<svg class="i" style="left:1104.5px;top:218px" width="6" height="4"><path d="M0 4h6L3 0z" fill="#505050"/></svg>
<svg class="i" style="left:1104.5px;top:400.5px" width="6" height="4"><path d="M0 0h6L3 4z" fill="#505050"/></svg>
<div class="a" style="left:176.5px;top:409.5px;width:924.8px;height:11.0px;background:#f0f0f0"></div>
<div class="a" style="left:187.9px;top:409.8px;width:711.0px;height:9.0px;background:#c1c1c1"></div>
<svg class="i" style="left:180px;top:412px" width="4" height="6"><path d="M4 0v6L0 3z" fill="#505050"/></svg>
<svg class="i" style="left:1093.5px;top:412px" width="4" height="6"><path d="M0 0v6L4 3z" fill="#505050"/></svg>
<div class="a" style="left:1101.3px;top:409.5px;width:11.7px;height:11.0px;background:#fff"></div>
<div class="a" style="left:171.0px;top:429.0px;width:947.0px;height:25.2px;background:linear-gradient(#fefefe,#ececec);border-top:1px solid #d8d8d8;border-bottom:1px solid #e0e0e0"></div>
<div class="t" style="left:174.8px;top:435.9px;font-size:8.9px;color:#444;font-weight:bold">Disponibilidad de Inventario</div>
<svg class="i" style="left:1102px;top:439px" width="10" height="6"><path d="M0.8 0.8L5 5 9.2 0.8" fill="none" stroke="#9a9a9a" stroke-width="1.6"/></svg>
<div class="a" style="left:171.0px;top:453.4px;width:947.0px;height:19.6px;background:#fff"></div>
<div class="a" style="left:171.0px;top:454.0px;width:56.6px;height:19.7px;background:#fff;border-top:2.6px solid #f7c24a;border-right:1px solid #e6e6e6;border-radius:2px 5px 0 0"></div>
<div class="t" style="left:180.3px;top:460.4px;font-size:8.9px;color:#333;font-weight:bold">Almacén</div>
<div class="a" style="left:228.3px;top:456.0px;width:71.7px;height:16.5px;background:linear-gradient(#fdfdfd,#ededed);border:1px solid #d9d9d9;border-bottom:0;border-radius:4px 4px 0 0"></div>
<div class="t" style="left:232.5px;top:460.4px;font-size:8.9px;color:#444;">D</div>
<div class="a" style="left:227.6px;top:472.5px;width:890.4px;height:1.2px;background:#f8d27a"></div>
<div class="a" style="left:180.3px;top:477.0px;width:929.5px;height:95.6px;background:#fff;border:1px solid #d8d8d8"></div>
<div class="a" style="left:181.3px;top:478.0px;width:927.5px;height:18.3px;background:linear-gradient(#f8f8f8,#e9e9e9);border-bottom:1px solid #d6d6d6"></div>
<div class="a" style="left:839.9px;top:478.5px;width:1.0px;height:59.0px;background:#dcdcdc"></div>
<div class="t" style="left:183.4px;top:481.8px;font-size:8.9px;color:#555;font-weight:bold">Almacén</div>
<div class="t" style="left:843.5px;top:481.8px;font-size:8.9px;color:#555;font-weight:bold">Cantidad Reservada</div>
<div class="a" style="left:181.3px;top:495.3px;width:927.5px;height:21.1px;background:#fff;border-bottom:1px solid #e3e8d9"></div>
<div class="a" style="left:181.3px;top:516.4px;width:927.5px;height:21.1px;background:#f4f4f4;border-bottom:1px solid #e3e8d9"></div>
<div class="a" style="left:839.9px;top:495.3px;width:1.0px;height:42.2px;background:#e0e0e0"></div>
<div class="t" style="left:184.8px;top:501.0px;font-size:8.9px;color:#555;">HQ Warehouse</div>
<div class="t" style="left:184.8px;top:522.1px;font-size:8.9px;color:#555;">Σ</div>
<div class="t" style="right:463.8px;top:501.0px;font-size:8.9px;color:#555;">30,00</div>
<div class="t" style="right:194.0px;top:501.0px;font-size:8.9px;color:#555;">0,00</div>
<div class="t" style="right:463.8px;top:522.1px;font-size:8.9px;color:#555;">30,00</div>
<div class="t" style="right:194.0px;top:522.1px;font-size:8.9px;color:#555;">0,00</div>
<div class="a" style="left:171.0px;top:578.0px;width:947.0px;height:1.0px;background:#dedede"></div>
<div class="a" style="left:171.0px;top:579.0px;width:947.0px;height:23.2px;background:#f9f9f9;border-bottom:1px solid #dcdcdc"></div>
<div class="a" style="left:178.6px;top:581.5px;width:17.7px;height:17.0px;background:#f4f4f4;border:1px solid #e0e0e0;border-radius:3px"></div>
<svg class="i" style="left:183px;top:586px" width="9" height="8"><path d="M4.2 0.5L1 4l3.2 3.5M8.2 0.5L5 4l3.2 3.5" fill="none" stroke="#b4b4b4" stroke-width="1.2"/></svg>
<div class="a" style="left:201.0px;top:581.5px;width:17.6px;height:17.0px;background:#f4f4f4;border:1px solid #e0e0e0;border-radius:3px"></div>
<svg class="i" style="left:207.5px;top:586px" width="5" height="8"><path d="M4.2 0.5L1 4l3.2 3.5" fill="none" stroke="#b4b4b4" stroke-width="1.2"/></svg>
<div class="a" style="left:228.0px;top:581.5px;width:32.0px;height:17.5px;background:#fff;border:1.3px solid #333"></div>
<div class="t" style="left:230.0px;top:584.6px;font-size:8.9px;color:#333;">1</div>
<div class="t" style="left:1060.5px;top:584.4px;font-size:8.9px;color:#444;">[ 1 - 25 / 27 ]</div>
<div class="a" style="left:171.0px;top:602.2px;width:947.0px;height:57.8px;background:#f2f2f2"></div>
<div class="a" style="left:172.3px;top:615.3px;width:48.2px;height:22.4px;background:linear-gradient(#f6df96,#e9cb78);border:1px solid #e2c676;border-radius:4px"></div>
<div class="a" style="left:224.0px;top:615.3px;width:47.6px;height:22.4px;background:linear-gradient(#f6df96,#e9cb78);border:1px solid #e2c676;border-radius:4px"></div>
<div class="a" style="left:276.3px;top:615.3px;width:47.5px;height:22.4px;background:linear-gradient(#f6df96,#e9cb78);border:1px solid #e2c676;border-radius:4px"></div>
<div class="a" style="left:327.6px;top:615.3px;width:47.9px;height:22.4px;background:linear-gradient(#f6df96,#e9cb78);border:1px solid #e2c676;border-radius:4px"></div>
<div class="a" style="left:379.2px;top:615.3px;width:46.3px;height:22.4px;background:linear-gradient(#fafafa,#ececec);border:1px solid #dddddd;border-radius:4px"></div>
<div class="a" style="left:427.2px;top:615.3px;width:47.6px;height:22.4px;background:linear-gradient(#f6df96,#e9cb78);border:1px solid #e2c676;border-radius:4px"></div>
<svg class="i" style="left:187.5px;top:619.5px" width="18.5" height="14"><use href="#refresh"/></svg>
<svg class="i" style="left:236px;top:617px" width="18" height="18" viewBox="0 0 18 18"><path d="M4 9C3 5 5 3 8 2" fill="none" stroke="#4f9a12" stroke-width="2.2"/><path d="M10 14C12 15 14 15 15 13" fill="none" stroke="#4f9a12" stroke-width="2.2"/></svg>
<svg class="i" style="left:290px;top:617px" width="19" height="19" viewBox="0 0 19 19"><circle cx="9.5" cy="9.5" r="7.5" fill="none" stroke="#1c9a7a" stroke-width="2"/></svg>
<svg class="i" style="left:337px;top:617px" width="22" height="19" viewBox="0 0 22 19"><circle cx="9" cy="8" r="6" fill="none" stroke="#3a3a3a" stroke-width="2.2"/><path d="M13 12l6 5.5" stroke="#3a3a3a" stroke-width="3"/></svg>
<div class="a" style="left:396px;top:629.5px;width:13px;height:3px;background:#6b8cc0"></div>
<svg class="i" style="left:441px;top:624px" width="19" height="11" viewBox="0 0 19 11"><path d="M1 6l4-4 4 4-4 4z M10 6l4-4 4 4-4 4z" fill="#d42a2a"/><path d="M6 9.5h7l-1 1.5h-5z" fill="#cfae50"/></svg>
<div class="t" style="left:424.0px;top:647.1px;font-size:8.9px;color:#333;">e con %)</div>
<div class="a" style="left:1101.2px;top:646.5px;width:1.0px;height:11.0px;background:#8fb4e8"></div>
<div class="t" style="left:1104.8px;top:646.6px;font-size:8.9px;color:#333;">27</div>
<div class="a" style="left:1132.7px;top:52.4px;width:151.0px;height:28.2px;background:linear-gradient(#fbdc72,#fbcd45);border:1px solid #efc04a;border-bottom:1px solid #e8b83a;border-radius:6px 6px 0 0"></div>
<div class="t" style="left:1136.8px;top:61.2px;font-size:9.8px;color:#333;">Ayuda</div>
<div class="a" style="left:1257.7px;top:57.8px;width:20.1px;height:17.0px;background:linear-gradient(#fff,#f0f0f0);border-radius:3px"></div>
<svg class="i" style="left:1263.7px;top:64px" width="8" height="4.6"><path d="M0 4.6h8L4 0z" fill="#444"/></svg>
<div class="a" style="left:1132.7px;top:80.6px;width:151.0px;height:89.4px;background:#fff"></div>
<div class="t" style="left:1136.2px;top:84.4px;font-size:8.9px;color:#333;font-weight:bold;letter-spacing:-0.52px">Código</div>
<div class="t" style="left:1136.2px;top:105.3px;font-size:8.38px;color:#555;font-style:italic">Código para el registro en el formato</div>
<div class="t" style="left:1136.2px;top:115.4px;font-size:8.38px;color:#555;font-style:italic">requerido; debe ser único</div>
<div class="t" style="left:1136.2px;top:136.3px;font-size:8.35px;color:#444;">Un código le permite a usted un</div>
<div class="t" style="left:1136.2px;top:146.5px;font-size:8.35px;color:#444;">método rápido de encontrar un</div>
<div class="t" style="left:1136.2px;top:156.5px;font-size:8.35px;color:#444;">registro en particular</div>
<div class="a" style="left:1133.0px;top:178.8px;width:150.8px;height:27.1px;background:linear-gradient(#fbdc72,#fbcd45);border:1px solid #efc04a;border-bottom:1px solid #e8b83a;border-radius:6px 6px 0 0"></div>
<div class="t" style="left:1137.0px;top:186.1px;font-size:9.8px;color:#333;">Cómo hacer</div>
<div class="a" style="left:1257.4px;top:184.0px;width:20.3px;height:17.3px;background:linear-gradient(#fff,#f0f0f0);border-radius:3px"></div>
<svg class="i" style="left:1263.5px;top:190.4px" width="8" height="4.6"><path d="M0 4.6h8L4 0z" fill="#444"/></svg>
<div class="a" style="left:1133.0px;top:205.9px;width:150.8px;height:39.1px;background:#fff"></div>
<div class="t" style="left:1136.3px;top:211.1px;font-size:8.4px;color:#555;font-style:italic">(No disponible)</div>
<div class="t" style="left:1136.3px;top:230.7px;font-size:8.9px;color:#333;font-weight:bold;letter-spacing:-0.43px">Información de Producto</div>
<div class="a" style="left:243.2px;top:32.9px;width:450.2px;height:597.1px;background:linear-gradient(#fff,#fcfcfc 40%,#f3f3f3);box-shadow:0 1px 6px rgba(0,0,0,0.45)"></div>
<div class="a" style="left:251.4px;top:32.9px;width:434.6px;height:588.9px;background:#fff"></div>
<svg class="i" style="left:256.0px;top:44.5px" width="4" height="7"><use href="#tri"/></svg>
<div class="t" style="left:266.5px;top:43.3px;font-size:9.0px;color:#333;">Administración del Sistema</div>
<svg class="i" style="left:256.0px;top:59.0px" width="4" height="7"><use href="#tri"/></svg>
<div class="t" style="left:266.5px;top:57.8px;font-size:9.0px;color:#333;">Diccionario de la Aplicación</div>
<svg class="i" style="left:256.0px;top:73.5px" width="4" height="7"><use href="#tri"/></svg>
<div class="t" style="left:266.5px;top:72.3px;font-size:9.0px;color:#333;">Relación con Terceros</div>
<svg class="i" style="left:254.8px;top:89.5px" width="7" height="4"><use href="#trid"/></svg>
<div class="t" style="left:266.5px;top:86.8px;font-size:9.0px;color:#333;">Ventas (Cotización-a-Factura)</div>
<svg class="i" style="left:267.6px;top:102.5px" width="4" height="7"><use href="#tri"/></svg>
<div class="t" style="left:278.8px;top:101.3px;font-size:9.0px;color:#333;">Reglas de Ventas y Mercadotecnia</div>
<svg class="i" style="left:266.4px;top:118.5px" width="7" height="4"><use href="#trid"/></svg>
<div class="t" style="left:278.8px;top:115.8px;font-size:9.0px;color:#333;">Órdenes de Venta</div>
<svg class="i" style="left:289.3px;top:130.1px" width="12.3" height="12.5"><use href="#win"/></svg>
<div class="t" style="left:305.0px;top:131.2px;font-size:8.25px;color:#333;">Órdenes de Venta</div>
<svg class="i" style="left:378.6px;top:133.0px" width="7.8" height="7.2"><use href="#newdoc"/></svg>
<svg class="i" style="left:289.3px;top:147.9px" width="12.3" height="12.5"><use href="#pie"/></svg>
<div class="t" style="left:305.0px;top:149.0px;font-size:8.25px;color:#333;">Detalle de Orden</div>
<svg class="i" style="left:289.3px;top:165.7px" width="12.3" height="12.5"><use href="#pie"/></svg>
<div class="t" style="left:305.0px;top:166.8px;font-size:8.25px;color:#333;">Órdenes Abiertas</div>
<div class="a" style="left:251.4px;top:180.6px;width:433.6px;height:18.0px;background:linear-gradient(#ebf6fd,#d6edfb)"></div>
<svg class="i" style="left:289.3px;top:183.4px" width="12.3" height="12.5"><use href="#pie"/></svg>
<div class="t" style="left:305.0px;top:184.5px;font-size:8.25px;color:#c94a3a;">Transacciones de Orden</div>
<svg class="i" style="left:289.3px;top:201.2px" width="12.3" height="12.5"><use href="#gear"/></svg>
<div class="t" style="left:305.0px;top:202.3px;font-size:8.25px;color:#333;">Convertir Cotización</div>
<svg class="i" style="left:289.3px;top:219.0px" width="12.3" height="12.5"><use href="#gear"/></svg>
<div class="t" style="left:305.0px;top:220.1px;font-size:8.25px;color:#333;">Recalcule Precios</div>
<svg class="i" style="left:289.3px;top:236.8px" width="12.3" height="12.5"><use href="#gear"/></svg>
<div class="t" style="left:305.0px;top:237.9px;font-size:8.25px;color:#333;">Generar OC desde Orden de Venta</div>
<svg class="i" style="left:289.3px;top:254.5px" width="12.3" height="12.5"><use href="#gear"/></svg>
<div class="t" style="left:305.0px;top:255.6px;font-size:8.25px;color:#333;">Reabrir Orden</div>
<svg class="i" style="left:289.3px;top:272.3px" width="12.3" height="12.5"><use href="#gear"/></svg>
<div class="t" style="left:305.0px;top:273.4px;font-size:8.25px;color:#333;">Proceso de Órdenes en Lote</div>
<svg class="i" style="left:289.3px;top:290.1px" width="12.3" height="12.5"><use href="#win"/></svg>
<div class="t" style="left:305.0px;top:291.2px;font-size:8.25px;color:#333;">PDV llave Disposición</div>
<svg class="i" style="left:392.7px;top:293.0px" width="7.8" height="7.2"><use href="#newdoc"/></svg>
<svg class="i" style="left:289.3px;top:307.9px" width="12.3" height="12.5"><use href="#gear"/></svg>
<div class="t" style="left:305.0px;top:309.0px;font-size:8.25px;color:#333;">Generar Tecla PDV</div>
<svg class="i" style="left:289.3px;top:325.7px" width="12.3" height="12.5"><use href="#win"/></svg>
<div class="t" style="left:305.0px;top:326.8px;font-size:8.25px;color:#333;">Terminal PDV</div>
<svg class="i" style="left:362.4px;top:328.6px" width="7.8" height="7.2"><use href="#newdoc"/></svg>
<svg class="i" style="left:289.3px;top:343.4px" width="12.3" height="12.5"><use href="#info"/></svg>
<div class="t" style="left:305.0px;top:344.5px;font-size:8.25px;color:#333;">Punto de Venta</div>
<svg class="i" style="left:289.3px;top:361.2px" width="12.3" height="12.5"><use href="#win"/></svg>
<div class="t" style="left:305.0px;top:362.3px;font-size:8.25px;color:#333;">Pago PDV</div>
<svg class="i" style="left:350.5px;top:364.1px" width="7.8" height="7.2"><use href="#newdoc"/></svg>
<svg class="i" style="left:267.6px;top:379.3px" width="4" height="7"><use href="#tri"/></svg>
<div class="t" style="left:278.8px;top:378.1px;font-size:9.0px;color:#333;">Entregas</div>
<svg class="i" style="left:267.6px;top:393.7px" width="4" height="7"><use href="#tri"/></svg>
<div class="t" style="left:278.8px;top:392.4px;font-size:9.0px;color:#333;">Facturas de Ventas</div>
<svg class="i" style="left:267.6px;top:408.0px" width="4" height="7"><use href="#tri"/></svg>
<div class="t" style="left:278.8px;top:406.8px;font-size:9.0px;color:#333;">Administración de Ventas</div>
<svg class="i" style="left:267.6px;top:422.4px" width="4" height="7"><use href="#tri"/></svg>
<div class="t" style="left:278.8px;top:421.1px;font-size:9.0px;color:#333;">Consulta de Facturas</div>
<svg class="i" style="left:256.0px;top:436.7px" width="4" height="7"><use href="#tri"/></svg>
<div class="t" style="left:266.5px;top:435.5px;font-size:9.0px;color:#333;">Compras (Requisición-a-Factura)</div>
<svg class="i" style="left:256.0px;top:451.1px" width="4" height="7"><use href="#tri"/></svg>
<div class="t" style="left:266.5px;top:449.8px;font-size:9.0px;color:#333;">Devoluciones</div>
<svg class="i" style="left:256.0px;top:465.4px" width="4" height="7"><use href="#tri"/></svg>
<div class="t" style="left:266.5px;top:464.2px;font-size:9.0px;color:#333;">Saldos Pendientes</div>
<svg class="i" style="left:256.0px;top:479.8px" width="4" height="7"><use href="#tri"/></svg>
<div class="t" style="left:266.5px;top:478.5px;font-size:9.0px;color:#333;">Gestión de Materiales</div>
<svg class="i" style="left:256.0px;top:494.1px" width="4" height="7"><use href="#tri"/></svg>
<div class="t" style="left:266.5px;top:492.9px;font-size:9.0px;color:#333;">Gestión de Proyectos</div>
<svg class="i" style="left:256.0px;top:508.4px" width="4" height="7"><use href="#tri"/></svg>
<div class="t" style="left:266.5px;top:507.2px;font-size:9.0px;color:#333;">Análisis de Desempeño</div>
<svg class="i" style="left:256.0px;top:522.8px" width="4" height="7"><use href="#tri"/></svg>
<div class="t" style="left:266.5px;top:521.6px;font-size:9.0px;color:#333;">Activos</div>
<svg class="i" style="left:256.0px;top:537.1px" width="4" height="7"><use href="#tri"/></svg>
<div class="t" style="left:266.5px;top:535.9px;font-size:9.0px;color:#333;">Manufactura</div>
<svg class="i" style="left:256.0px;top:551.5px" width="4" height="7"><use href="#tri"/></svg>
<div class="t" style="left:266.5px;top:550.3px;font-size:9.0px;color:#333;">Business Reports</div>
<div class="t" style="left:258.6px;top:605.0px;font-size:8.65px;color:#333;">Expandir árbol</div>
<svg class="i" style="left:588.8px;top:606px" width="12.5" height="12.5" viewBox="0 0 12 12"><path d="M2.2 2.2L10 10" stroke="#8d8d8d" stroke-width="1.5"/><path d="M0.6 2.6L2.6 0.6 4.2 1.4 1.4 4.2z" fill="#9b9b9b"/><path d="M10.8 1.2L5.2 6.8" stroke="#a0a0a0" stroke-width="1.2"/><path d="M9.8 0.4l1.8 1.8-1 1-1.8-1.8z" fill="#9a9a9a"/><ellipse cx="3" cy="9" rx="2.8" ry="1.9" transform="rotate(-45 3 9)" fill="#4470b8"/></svg>
<div class="a" style="left:352.0px;top:214.2px;width:207.7px;height:15.6px;background:#fff;border:1px solid #767676;box-shadow:2px 2px 2px rgba(0,0,0,0.35)"></div>
<div class="t" style="left:356.0px;top:217.2px;font-size:10.0px;color:#575757;">Reporte de transacciones de orden de venta</div>
<div class="a" style="left:0.0px;top:643.6px;width:425.0px;height:16.4px;background:#dedede;border-radius:0 3px 0 0;border-top:1px solid #d2d2d2;border-right:1px solid #d2d2d2"></div>
<div class="t" style="left:-8.5px;top:648.7px;font-size:9.2px;color:#555;">javascript:;</div>
</body></html>
